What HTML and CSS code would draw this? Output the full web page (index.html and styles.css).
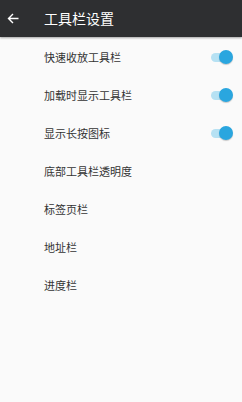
FILE: index.html
```html
<!DOCTYPE html>
<html>
<head>
<meta charset="utf-8">
<link rel="stylesheet" href="styles.css">
</head>
<body>
<div class="app">
  <header class="bar">
    <svg class="back" width="12" height="11" viewBox="0 0 12 11"><path d="M11.5 5.5H1.5M6 1L1.5 5.5L6 10" fill="none" stroke="#fff" stroke-width="1.4"/></svg>
    <span class="title">工具栏设置</span>
  </header>
  <div class="list">
    <div class="row"><span>快速收放工具栏</span><span class="switch"><span class="track"></span><span class="thumb"></span></span></div>
    <div class="row"><span>加载时显示工具栏</span><span class="switch"><span class="track"></span><span class="thumb"></span></span></div>
    <div class="row"><span>显示长按图标</span><span class="switch"><span class="track"></span><span class="thumb"></span></span></div>
    <div class="row"><span>底部工具栏透明度</span></div>
    <div class="row"><span>标签页栏</span></div>
    <div class="row"><span>地址栏</span></div>
    <div class="row"><span>进度栏</span></div>
  </div>
</div>
</body>
</html>
```
FILE: styles.css
```css
html, body { margin: 0; padding: 0; }
body {
  background: #fafafa;
  font-family: Roboto, "Noto Sans CJK SC", sans-serif;
  width: 242px;
  height: 402px;
  overflow: hidden;
}
.bar {
  height: 37px;
  background: #2e2f31;
  display: flex;
  align-items: center;
  box-shadow: 0 1px 2px rgba(0,0,0,0.35);
  position: relative;
}
.back { margin-left: 7px; margin-top: -1px; }
.title {
  margin-left: 25px;
  color: #fff;
  font-size: 14px;
  margin-top: -1px;
}
.list { padding-top: 1px; }
.row {
  height: 38px;
  display: flex;
  align-items: center;
  justify-content: space-between;
  padding-left: 44px;
  padding-right: 9px;
  font-size: 11px;
  color: #333;
}
.switch {
  position: relative;
  width: 22px;
  height: 14px;
}
.track {
  position: absolute;
  left: 0;
  top: 2.5px;
  width: 20px;
  height: 9px;
  border-radius: 5px;
  background: #b6e1f3;
}
.thumb {
  position: absolute;
  right: 0;
  top: 0;
  width: 14px;
  height: 14px;
  border-radius: 50%;
  background: #2aa6df;
  box-shadow: 0 1px 1px rgba(0,0,0,0.2);
}
```
